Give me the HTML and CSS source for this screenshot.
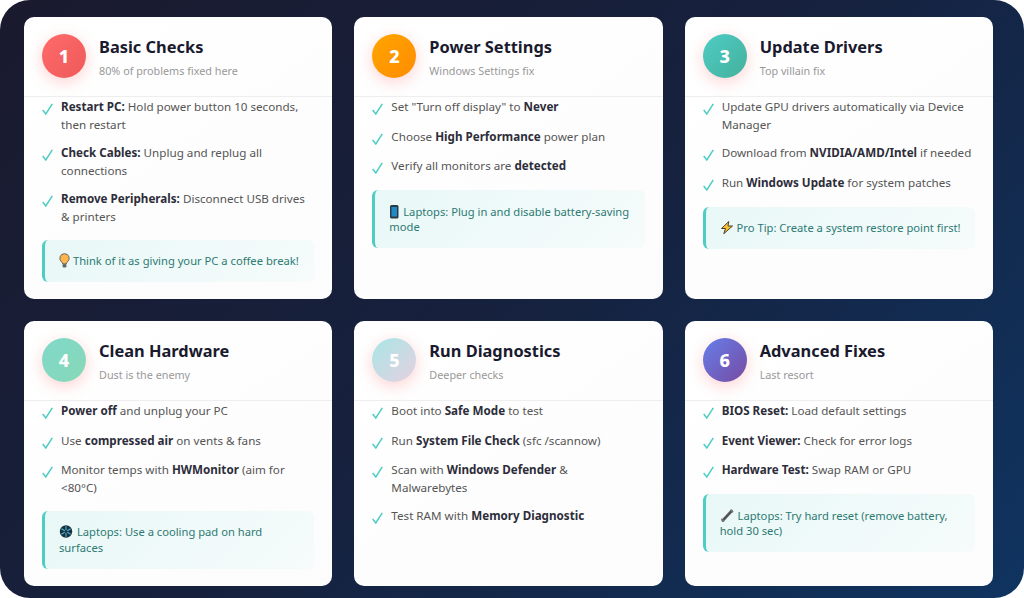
FILE: index.html
```html
<!DOCTYPE html>
<html lang="en">
<head>
<meta charset="utf-8">
<title>PC Display Troubleshooting</title>
<link rel="stylesheet" href="styles.css">
</head>
<body>
<svg class="defs" width="0" height="0" aria-hidden="true"><defs>
<symbol id="check" viewBox="0 0 11 12"><path d="M0.700 7 L3.800 11 L10.300 0.800" fill="none" stroke="#4ecdc4" stroke-width="1.500"/></symbol>
</defs></svg>
<main class="board">
  <section class="card">
    <header class="head"><div class="num n1">1</div><div class="titles"><h2>Basic Checks</h2><p>80% of problems fixed here</p></div></header>
    <ul class="list">
      <li><svg class="tick"><use href="#check"/></svg><span><b>Restart PC:</b> Hold power button 10 seconds, then restart</span></li>
      <li><svg class="tick"><use href="#check"/></svg><span><b>Check Cables:</b> Unplug and replug all connections</span></li>
      <li><svg class="tick"><use href="#check"/></svg><span><b>Remove Peripherals:</b> Disconnect USB drives &amp; printers</span></li>
    </ul>
    <div class="tip"><svg class="emoji w11" viewBox="0 0 11 15"><path d="M5.500 .7a4.600 4.600 0 0 0-2.800 8.300c.6.600.9 1.100.9 1.900h3.800c0-.8.3-1.300.9-1.900A4.600 4.600 0 0 0 5.500.7z" fill="#ffb74d" stroke="#5a5a5a" stroke-width=".9"/><rect x="3.600" y="11" width="3.800" height="3.400" rx="1.200" fill="#666"/></svg> Think of it as giving your PC a coffee break!</div>
  </section>
  <section class="card">
    <header class="head"><div class="num n2">2</div><div class="titles"><h2>Power Settings</h2><p>Windows Settings fix</p></div></header>
    <ul class="list">
      <li><svg class="tick"><use href="#check"/></svg><span>Set "Turn off display" to <b>Never</b></span></li>
      <li><svg class="tick"><use href="#check"/></svg><span>Choose <b>High Performance</b> power plan</span></li>
      <li><svg class="tick"><use href="#check"/></svg><span>Verify all monitors are <b>detected</b></span></li>
    </ul>
    <div class="tip"><svg class="emoji w11" viewBox="0 0 11 15"><rect x="1" y="1" width="8.500" height="13.500" rx="1.500" fill="#2b3a42"/><rect x="2.500" y="3" width="5.500" height="9.500" fill="#1e88c9"/></svg> Laptops: Plug in and disable battery-saving mode</div>
  </section>
  <section class="card">
    <header class="head"><div class="num n3">3</div><div class="titles"><h2>Update Drivers</h2><p>Top villain fix</p></div></header>
    <ul class="list">
      <li><svg class="tick"><use href="#check"/></svg><span>Update GPU drivers automatically via Device Manager</span></li>
      <li><svg class="tick"><use href="#check"/></svg><span>Download from <b>NVIDIA/AMD/Intel</b> if needed</span></li>
      <li><svg class="tick"><use href="#check"/></svg><span>Run <b>Windows Update</b> for system patches</span></li>
    </ul>
    <div class="tip"><svg class="emoji w14" viewBox="0 0 14 15"><path d="M8.800 1.500 1.500 8.500h4L3.800 13.700 12.500 6H8z" fill="#fbc02d" stroke="#4a4030" stroke-width="1" stroke-linejoin="round"/></svg> Pro Tip: Create a system restore point first!</div>
  </section>
  <section class="card">
    <header class="head"><div class="num n4">4</div><div class="titles"><h2>Clean Hardware</h2><p>Dust is the enemy</p></div></header>
    <ul class="list">
      <li><svg class="tick"><use href="#check"/></svg><span><b>Power off</b> and unplug your PC</span></li>
      <li><svg class="tick"><use href="#check"/></svg><span>Use <b>compressed air</b> on vents &amp; fans</span></li>
      <li><svg class="tick"><use href="#check"/></svg><span>Monitor temps with <b>HWMonitor</b> (aim for &lt;80°C)</span></li>
    </ul>
    <div class="tip"><svg class="emoji w15" viewBox="0 0 15 15"><circle cx="7" cy="7.500" r="6.200" fill="#16323f"/><path d="M7 2.200v10.600M2.400 4.800l9.200 5.400M11.600 4.800l-9.200 5.400" stroke="#4fb3d9" stroke-width="1.100"/><circle cx="7" cy="7.500" r="1.500" fill="#16323f"/></svg> Laptops: Use a cooling pad on hard surfaces</div>
  </section>
  <section class="card">
    <header class="head"><div class="num n5">5</div><div class="titles"><h2>Run Diagnostics</h2><p>Deeper checks</p></div></header>
    <ul class="list">
      <li><svg class="tick"><use href="#check"/></svg><span>Boot into <b>Safe Mode</b> to test</span></li>
      <li><svg class="tick"><use href="#check"/></svg><span>Run <b>System File Check</b> (sfc /scannow)</span></li>
      <li><svg class="tick"><use href="#check"/></svg><span>Scan with <b>Windows Defender</b> &amp; Malwarebytes</span></li>
      <li><svg class="tick"><use href="#check"/></svg><span>Test RAM with <b>Memory Diagnostic</b></span></li>
    </ul>
  </section>
  <section class="card">
    <header class="head"><div class="num n6">6</div><div class="titles"><h2>Advanced Fixes</h2><p>Last resort</p></div></header>
    <ul class="list">
      <li><svg class="tick"><use href="#check"/></svg><span><b>BIOS Reset:</b> Load default settings</span></li>
      <li><svg class="tick"><use href="#check"/></svg><span><b>Event Viewer:</b> Check for error logs</span></li>
      <li><svg class="tick"><use href="#check"/></svg><span><b>Hardware Test:</b> Swap RAM or GPU</span></li>
    </ul>
    <div class="tip"><svg class="emoji w15" viewBox="0 0 15 15"><path d="M2.800 12.500 11.600 3" stroke="#555" stroke-width="2.600" stroke-linecap="round"/><path d="M10.400 1.800l2.800 2.500M1.400 10.800l2.700 2.700" stroke="#777" stroke-width="1.500"/></svg> Laptops: Try hard reset (remove battery, hold 30 sec)</div>
  </section>
</main>
</body>
</html>
```
FILE: styles.css
```css
* { box-sizing: border-box; margin: 0; padding: 0; }
html, body { width: 1024px; height: 598px; overflow: hidden; background: #fff; }
body { font-family: "Noto Sans", "Open Sans", sans-serif; }
.defs { display: block; height: 0; }
.board {
  width: 1024px;
  height: 598px;
  padding: 17px 31px 12px 24px;
  border-radius: 30px;
  background: linear-gradient(135deg, #1a1a2e 0%, #16213e 50%, #0f3460 100%);
  display: grid;
  grid-template-columns: repeat(3, 1fr);
  grid-template-rows: 282px 265px;
  gap: 22px;
}
.card {
  background: linear-gradient(145deg, #ffffff, #fcfcfc);
  border-radius: 10px;
  overflow: hidden;
  display: flex;
  flex-direction: column;
}
.head {
  display: flex;
  gap: 13px;
  height: 80px;
  padding: 17px 18px 0;
  border-bottom: 1px solid #eeeeee;
  flex: none;
}
.num {
  width: 44px;
  height: 44px;
  border-radius: 50%;
  flex: none;
  color: #fff;
  font-size: 18px;
  font-weight: 800;
  line-height: 44px;
  text-align: center;
  box-shadow: 0 4px 15px rgba(255, 107, 107, 0.3);
}
.n1 { background: linear-gradient(135deg, #ff6b6b, #ee5a5a); }
.n2 { background: linear-gradient(135deg, #ffa500, #ff8c00); }
.n3 { background: linear-gradient(135deg, #4ecdc4, #44b09d); }
.n4 { background: linear-gradient(135deg, #7fd8c8, #88d8b8); }
.n5 { background: linear-gradient(135deg, #a8e6e6, #e6d0e0); }
.n6 { background: linear-gradient(135deg, #667eea, #764ba2); }
.titles h2 { font-size: 16.400px; font-weight: 700; line-height: 24px; margin-top: 0.500px; color: #1a1a2e; }
.titles p { font-size: 10.800px; line-height: 16px; margin-top: 4px; color: #999999; }
.list { list-style: none; display: flex; flex-direction: column; gap: 10px; padding: 1px 18px 0; flex: none; }
.list li { display: flex; gap: 8px; font-size: 11.650px; line-height: 18px; min-height: 19.500px; color: #555555; }
.list b { font-weight: 700; color: #2d2d3a; }
.tick { width: 11px; height: 12px; flex: none; margin-top: 5px; }
.tip {
  margin: 13.500px 18px 0;
  padding: 13.500px 14px;
  border-left: 3px solid #4ecdc4;
  border-radius: 6px;
  background: linear-gradient(135deg, #e8f8f7, #f6fbfb);
  color: #2d7a73;
  font-size: 11.200px;
  line-height: 15.500px;
}
.emoji { height: 15px; vertical-align: -3px; }
.w11 { width: 11px; }
.w14 { width: 14px; }
.w15 { width: 15px; }
```
